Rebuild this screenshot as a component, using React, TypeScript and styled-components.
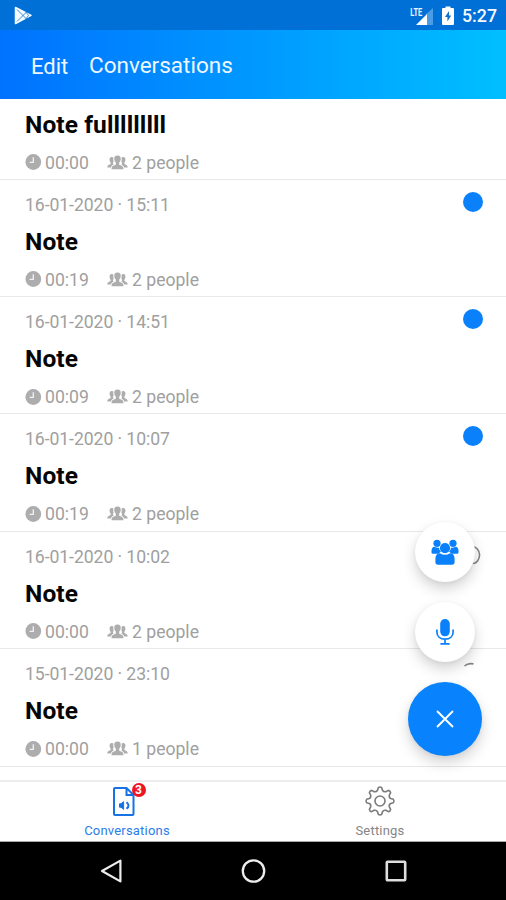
import React from "react";
import styled, { createGlobalStyle } from "styled-components";

const GlobalStyle = createGlobalStyle`
  * { box-sizing: border-box; }
  body { margin: 0; background: #fff; font-family: Roboto, sans-serif; }
  svg { display: block; flex: none; }
`;

const Screen = styled.div`
  position: relative;
  display: flex;
  flex-direction: column;
  width: 506px;
  height: 900px;
  overflow: hidden;
  background: #fff;
`;

const StatusBar = styled.div`
  display: flex;
  align-items: center;
  height: 30px;
  flex: none;
  padding: 1px 9px 0 13px;
  background: #006fd6;
  color: #f4faff;
`;

const StatusIcons = styled.div`
  display: flex;
  align-items: center;
  margin-left: auto;
`;

const BatterySlot = styled.span`
  margin-left: 9px;
`;

const Clock = styled.span`
  margin-left: 8px;
  font-size: 17.8px;
  font-weight: 500;
  line-height: 27px;
`;

const Header = styled.header`
  display: flex;
  align-items: center;
  height: 68.5px;
  flex: none;
  padding-left: 31px;
  background: linear-gradient(90deg, #0072ff, #00bfff);
  color: #eef7ff;
`;

const EditButton = styled.span`
  width: 58px;
  padding-top: 4px;
  font-size: 22px;
`;

const HeaderTitle = styled.span`
  padding-top: 2px;
  font-size: 22.5px;
`;

const List = styled.main`
  flex: 1;
  min-height: 0;
  overflow: hidden;
`;

const Row = styled.article<{ $compact?: boolean }>`
  display: flex;
  justify-content: space-between;
  height: ${(p) => (p.$compact ? 81.2 : 117.4)}px;
  padding: ${(p) => (p.$compact ? 10 : 12)}px 23.5px 0 25px;
  border-bottom: 1.5px solid #e8e8e8;
`;

const RowText = styled.div`
  display: flex;
  flex-direction: column;
`;

const DateLine = styled.div`
  height: 24px;
  margin: 1px 0 9px;
  font-size: 17.6px;
  line-height: 24px;
  letter-spacing: -0.06px;
  color: #a0a0a0;
`;

const Title = styled.div`
  height: 32px;
  font-size: 24.5px;
  line-height: 32px;
  font-weight: 700;
  letter-spacing: 0.1px;
  color: #050505;
`;

const Meta = styled.div`
  display: flex;
  align-items: center;
  height: 24px;
  margin-top: 10px;
  font-size: 17.6px;
  line-height: 24px;
  color: #a0a0a0;
`;

const Duration = styled.span`
  width: 62px;
  margin-left: 3px;
`;

const People = styled.span`
  margin-left: 4px;
`;

const UnreadDot = styled.span`
  width: 20px;
  height: 20px;
  flex: none;
  background: #0a80fa;
  border-radius: 50%;
`;

const FloatingActions = styled.div`
  position: absolute;
  left: 408px;
  top: 522px;
  width: 74px;
  display: flex;
  flex-direction: column;
  align-items: center;
`;

const ActionButton = styled.button<{ $primary?: boolean }>`
  display: flex;
  align-items: center;
  justify-content: center;
  width: ${(p) => (p.$primary ? 74 : 60)}px;
  height: ${(p) => (p.$primary ? 74 : 60)}px;
  margin: ${(p) => (p.$primary ? "-0.5px 0 0" : "0 0 20px")};
  padding: 0;
  border: 0;
  border-radius: 50%;
  color: ${(p) => (p.$primary ? "#fff" : "#0a80fa")};
  background: ${(p) => (p.$primary ? "#0882fd" : "#fff")};
  box-shadow: 0 7px 14px rgba(0, 0, 0, 0.17), 0 1px 4px rgba(0, 0, 0, 0.06);
`;

const TabBar = styled.nav`
  display: flex;
  height: 62px;
  flex: none;
  border-top: 2.5px solid #ededed;
  border-bottom: 1px solid #aaa;
  background: #fff;
`;

const Tab = styled.div<{ $active?: boolean }>`
  display: flex;
  flex: 1;
  flex-direction: column;
  align-items: center;
  padding: 3px 0 0 1px;
  font-size: 13px;
  line-height: 16px;
  color: ${(p) => (p.$active ? "#2b7de9" : "#858585")};
`;

const TabIcon = styled.div<{ $nudge?: boolean }>`
  position: relative;
  height: 32px;
  margin-bottom: 6px;
  margin-right: ${(p) => (p.$nudge ? "7px" : "0")};
`;

const TabLabel = styled.span`
  letter-spacing: 0.2px;
`;

const Badge = styled.span`
  position: absolute;
  left: 19px;
  top: -2px;
  width: 14px;
  height: 14px;
  border-radius: 50%;
  background: #ee1421;
  color: #fff;
  font-size: 12px;
  font-weight: 700;
  line-height: 14px;
  text-align: center;
`;

const NavigationBar = styled.div`
  display: flex;
  justify-content: space-between;
  align-items: center;
  height: 58px;
  flex: none;
  padding: 0 99px 0 99px;
  background: #000;
`;

const PlayIcon = () => (
  <svg width="20" height="20" viewBox="0 0 20 20">
    <path d="M2.5 1.5 L18 9.3 L2.5 17.5 Z" fill="#f5fbff" stroke="#f5fbff" strokeWidth="1.5" strokeLinejoin="round" />
    <path d="M4 3.5 L13.5 13 M4 15.5 L13.5 6 M13 6.2 L15.5 9.4 L13 12.7" fill="none" stroke="#0870ce" strokeWidth="0.8" />
  </svg>
);

const SignalIcon = () => (
  <svg width="24" height="22" viewBox="0 0 24 22">
    <path d="M18.5 8 L24 3 V20 H17.5 V8Z" fill="#4a9de5" />
    <path d="M7 20 L18 9 V20 Z" fill="#fff" />
    <text x="1.2" y="11.2" fontFamily="Roboto, sans-serif" fontSize="10.8" fontWeight="700" textLength="12" lengthAdjust="spacingAndGlyphs" fill="#e9f5ff">LTE</text>
  </svg>
);

const BatteryIcon = () => (
  <svg width="12" height="19" viewBox="0 0 12 19">
    <path d="M3.5 2 V0.5 H8.5 V2 H11 Q12 2 12 3 V18 Q12 19 11 19 H1 Q0 19 0 18 V3 Q0 2 1 2Z" fill="#fff" />
    <path d="M7 5 L3 11 H5.4 V15.5 L9.2 9.5 H7Z" fill="#0b71d3" />
  </svg>
);

const ClockIcon = () => (
  <svg width="17" height="17" viewBox="0 0 17 17">
    <circle cx="8.3" cy="8" r="7.9" fill="#adadad" />
    <path d="M8.3 3.3 V8.4 H4.6" fill="none" stroke="#f2f2f2" strokeWidth="1.3" />
  </svg>
);

const GroupIcon = () => (
  <svg width="21" height="16" viewBox="0 0 21 16" fill="#adadad">
    <path d="M10.5 .4 C13 .4 14 2 13.7 4.4 C13.5 5.9 12.9 6.8 12.2 7.6 V9.8 C13.6 10.6 16.5 10.5 16.5 14.3 H4.5 C4.5 10.5 7.4 10.6 8.8 9.8 V7.6 C8.1 6.8 7.5 5.9 7.3 4.4 C7 2 8 .4 10.5 .4Z" />
    <path d="M5.2 2 C3.2 1.7 2.4 3.2 2.6 5 C2.7 6.4 3.2 7 3.6 7.6 V9 C2.5 9.8 .3 9.8 .3 12.5 H3.9 C4.3 10.8 5.2 10.3 6.7 9.5 L6 8.6 V7.5 L6.7 7 Q6.1 5 6.3 2.6Z" />
    <path d="M15.8 2 C17.8 1.7 18.6 3.2 18.4 5 C18.3 6.4 17.8 7 17.4 7.6 V9 C18.5 9.8 20.7 9.8 20.7 12.5 H17.1 C16.7 10.8 15.8 10.3 14.3 9.5 L15 8.6 V7.5 L14.3 7 Q14.9 5 14.7 2.6Z" />
  </svg>
);

const ProgressIcon = ({ quarter }: { quarter: boolean }) => (
  <svg width="20" height="20" viewBox="0 0 20 20">
    <path
      d={quarter ? "M1.5 5 Q5 1.7 10.5 2.9" : "M9 2 A9.2 9.2 0 0 1 9.5 20"}
      fill="none"
      stroke="#858585"
      strokeWidth="1.6"
    />
  </svg>
);

const UsersIcon = () => (
  <svg width="28" height="26" viewBox="0 0 28 26" fill="currentColor">
    <circle cx="6" cy="4.3" r="3.6" />
    <circle cx="22" cy="4.3" r="3.6" />
    <path d="M3.5 7.8 Q.5 8 .5 12 V13.5 Q.5 14.8 2 14.8 H7.5 L10 12.6 Q8 11 8.1 8.7 Q6 9.3 3.5 7.8Z" />
    <path d="M24.5 7.8 Q27.5 8 27.5 12 V13.5 Q27.5 14.8 26 14.8 H20.5 L18 12.6 Q20 11 19.9 8.7 Q22 9.3 24.5 7.8Z" />
    <circle cx="14" cy="9.1" r="5.1" />
    <path d="M9 14.2 Q14 17.5 19 14.2 Q23.6 14.2 23.6 20 V23 Q23.6 25.7 21 25.7 H7 Q4.4 25.7 4.4 23 V20 Q4.4 14.2 9 14.2Z" />
  </svg>
);

const MicrophoneIcon = () => (
  <svg width="18" height="26" viewBox="0 0 18 26">
    <rect x="4.2" y="0" width="9.6" height="17.3" rx="4.7" fill="currentColor" />
    <path d="M.9 10.6 V13 C.9 17.2 4 20.2 9 20.2 S17.1 17.2 17.1 13 V10.6 M9 20 V24.7 M4.4 24.8 H13.6" fill="none" stroke="currentColor" strokeWidth="1.7" />
  </svg>
);

const CloseIcon = () => (
  <svg width="18" height="18" viewBox="0 0 18 18" stroke="#fff" strokeWidth="1.9">
    <path d="M1 1 L17 17 M17 1 L1 17" />
  </svg>
);

const AudioFileIcon = () => (
  <svg width="22" height="32" viewBox="0 0 22 32" fill="none" stroke="#1672e5" strokeWidth="2">
    <path d="M2 3 H13.5 L20.5 10 V29 Q20.5 30 19.5 30 H2 Q1 30 1 29 V4 Q1 3 2 3Z M13.5 3 V10 H20.5" />
    <path d="M6.5 18.8 H8 L10.6 16.7 V24.3 L8 22.2 H6.5Z" fill="#1672e5" strokeWidth="1" />
    <path d="M13.5 17.2 Q17.5 20.5 13.5 23.8" strokeWidth="2" />
  </svg>
);

const toothAngles = [0, 45, 90, 135, 180, 225, 270, 315];
const gearPath = toothAngles
  .map((angle, index) => {
    const point = (radius: number, offset: number) => {
      const radians = ((angle + offset) * Math.PI) / 180;
      return `${(16 + radius * Math.sin(radians)).toFixed(2)} ${(16 - radius * Math.cos(radians)).toFixed(2)}`;
    };
    return `${index ? "L" : "M"}${point(11, -13)} L${point(13.5, -7)} Q${point(14.6, 0)} ${point(13.5, 7)} L${point(11, 13)} Q${point(9.5, 22.5)} ${point(11, 32)}`;
  })
  .join(" ");

const SettingsIcon = () => (
  <svg width="32" height="32" viewBox="0 0 32 32" fill="none" stroke="#7b7b7b" strokeWidth="1.6" strokeLinejoin="round">
    <path d={`${gearPath}Z`} />
    <circle cx="16" cy="16" r="5" />
  </svg>
);

const BackIcon = () => (
  <svg width="24" height="26" viewBox="0 0 24 26" fill="none" stroke="#ededed" strokeWidth="2.2" strokeLinejoin="round">
    <path d="M21.4 2.6 V23.4 L3 13Z" />
  </svg>
);

const HomeIcon = () => (
  <svg width="26" height="26" viewBox="0 0 26 26" fill="none" stroke="#ededed" strokeWidth="2.3">
    <circle cx="12.5" cy="13" r="10.7" />
  </svg>
);

const RecentsIcon = () => (
  <svg width="22" height="22" viewBox="0 0 22 22" fill="none" stroke="#dedede" strokeWidth="2.6">
    <rect x="1.8" y="1.8" width="18.4" height="18.4" rx="0.8" />
  </svg>
);

type Conversation = {
  id: number;
  date?: string;
  title: string;
  duration: string;
  people: string;
  status: "none" | "unread" | "half" | "quarter";
};

const conversations: Conversation[] = [
  { id: 1, title: "Note fulllllllll", duration: "00:00", people: "2 people", status: "none" },
  { id: 2, date: "16-01-2020 · 15:11", title: "Note", duration: "00:19", people: "2 people", status: "unread" },
  { id: 3, date: "16-01-2020 · 14:51", title: "Note", duration: "00:09", people: "2 people", status: "unread" },
  { id: 4, date: "16-01-2020 · 10:07", title: "Note", duration: "00:19", people: "2 people", status: "unread" },
  { id: 5, date: "16-01-2020 · 10:02", title: "Note", duration: "00:00", people: "2 people", status: "half" },
  { id: 6, date: "15-01-2020 · 23:10", title: "Note", duration: "00:00", people: "1 people", status: "quarter" },
];

export default function App() {
  return (
    <Screen>
      <GlobalStyle />
      <StatusBar>
        <PlayIcon />
        <StatusIcons>
          <SignalIcon />
          <BatterySlot><BatteryIcon /></BatterySlot>
          <Clock>5:27</Clock>
        </StatusIcons>
      </StatusBar>
      <Header>
        <EditButton>Edit</EditButton>
        <HeaderTitle>Conversations</HeaderTitle>
      </Header>
      <List>
        {conversations.map((item) => (
          <Row key={item.id} $compact={!item.date}>
            <RowText>
              {item.date && <DateLine>{item.date}</DateLine>}
              <Title>{item.title}</Title>
              <Meta>
                <ClockIcon />
                <Duration>{item.duration}</Duration>
                <GroupIcon />
                <People>{item.people}</People>
              </Meta>
            </RowText>
            {item.status === "unread" && <UnreadDot />}
            {(item.status === "half" || item.status === "quarter") && (
              <ProgressIcon quarter={item.status === "quarter"} />
            )}
          </Row>
        ))}
      </List>
      <TabBar>
        <Tab $active>
          <TabIcon $nudge>
            <AudioFileIcon />
            <Badge>3</Badge>
          </TabIcon>
          <TabLabel>Conversations</TabLabel>
        </Tab>
        <Tab>
          <TabIcon><SettingsIcon /></TabIcon>
          <TabLabel>Settings</TabLabel>
        </Tab>
      </TabBar>
      <NavigationBar>
        <BackIcon />
        <HomeIcon />
        <RecentsIcon />
      </NavigationBar>
      <FloatingActions>
        <ActionButton aria-label="New group"><UsersIcon /></ActionButton>
        <ActionButton aria-label="Record"><MicrophoneIcon /></ActionButton>
        <ActionButton $primary aria-label="Close"><CloseIcon /></ActionButton>
      </FloatingActions>
    </Screen>
  );
}
